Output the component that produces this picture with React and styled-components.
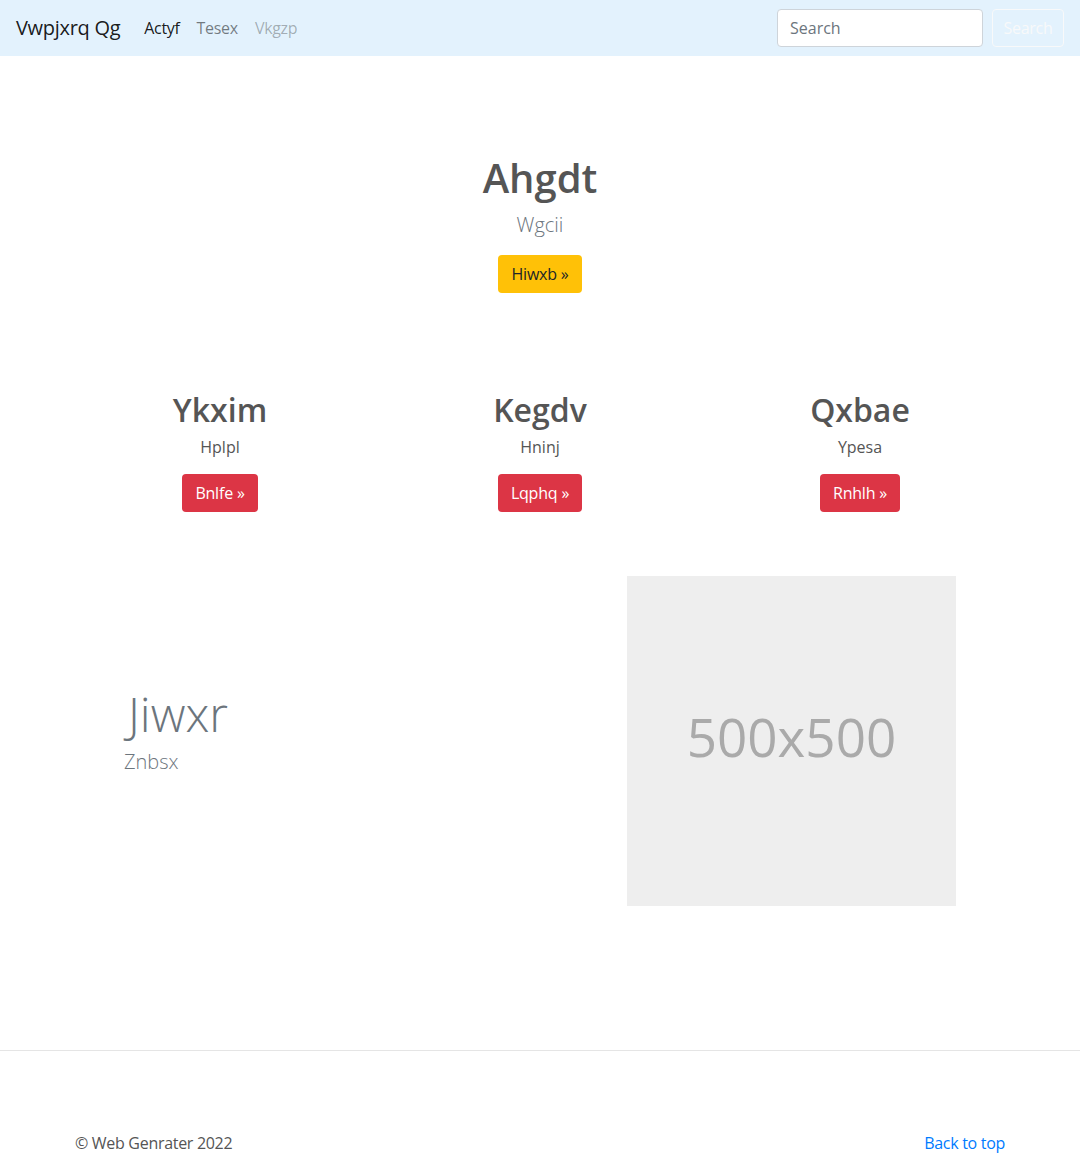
import React from "react";
import styled, { createGlobalStyle } from "styled-components";

const Global = createGlobalStyle`
  * { box-sizing: border-box; }
  body {
    margin: 0;
    font-family: "Open Sans", "Noto Sans", "Liberation Sans", sans-serif;
    font-size: 16px;
    line-height: 1.5;
    color: #555;
    background: #fff;
  }
`;

const Navbar = styled.nav`
  height: 56px;
  background: #e3f2fd;
  display: flex;
  align-items: center;
  padding: 0 16px;
`;
const Brand = styled.a`
  font-size: 20px;
  letter-spacing: -0.3px;
  color: rgba(0, 0, 0, 0.9);
  margin-right: 24px;
  text-decoration: none;
`;
const NavList = styled.div`
  display: flex;
  gap: 17px;
  flex: 1;
`;
const NavLink = styled.a`
  letter-spacing: -0.3px;
  color: ${(p) => (p.$state === "active" ? "rgba(0,0,0,0.9)" : p.$state === "disabled" ? "rgba(0,0,0,0.3)" : "rgba(0,0,0,0.5)")};
  text-decoration: none;
`;
const SearchForm = styled.form`
  display: flex;
  gap: 9px;
`;
const SearchInput = styled.input`
  width: 206px;
  height: 38px;
  border: 1px solid #ced4da;
  border-radius: 4px;
  padding: 6px 12px;
  font: inherit;
  color: #495057;
  background: #fff;
  &::placeholder { color: #6c757d; }
`;
const OutlineButton = styled.button`
  height: 38px;
  width: 72px;
  padding: 6px 0;
  border: 1px solid #f8f9fa;
  border-radius: 4px;
  background: transparent;
  color: #f8f9fa;
  font: inherit;
  letter-spacing: -0.3px;
`;

const Hero = styled.section`
  text-align: center;
  padding-top: 98px;
`;
const H1 = styled.h1`
  font-size: 40px;
  font-weight: 600;
  line-height: 1.2;
  margin: 0 0 8px;
  color: #555;
`;
const Lead = styled.p`
  font-size: 20px;
  font-weight: 300;
  margin: 0 0 15px;
  color: #6c757d;
`;
const Button = styled.a`
  display: inline-block;
  padding: 6px 12px;
  border: 1px solid transparent;
  border-radius: 4px;
  font-size: 16px;
  line-height: 1.5;
  letter-spacing: -0.2px;
  text-decoration: none;
  background: ${(p) => (p.$variant === "warning" ? "#ffc107" : "#dc3545")};
  color: ${(p) => (p.$variant === "warning" ? "#212529" : "#fff")};
`;

const Container = styled.div`
  width: 960px;
  margin: 0 auto;
  padding: 0 15px;
`;
const Columns = styled.div`
  display: grid;
  grid-template-columns: repeat(3, 1fr);
  margin: 98px -15px 0;
`;
const Col = styled.div`
  text-align: center;
  padding: 0 15px;
`;
const H2 = styled.h2`
  font-size: 32px;
  font-weight: 600;
  line-height: 1.2;
  margin: 0 0 6px;
  color: #555;
`;
const Para = styled.p`
  margin: 0 0 15px;
  color: #555;
`;

const Featurette = styled.div`
  display: flex;
  align-items: center;
  margin-top: 64px;
  padding: 0 49px;
`;
const FeatText = styled.div`
  flex: 1;
  padding-bottom: 21px;
`;
const FeatHeading = styled.h2`
  font-size: 48px;
  font-weight: 300;
  line-height: 1.2;
  margin: 0 0 5px;
  padding-left: 4px;
  color: #6c757d;
`;
const FeatLead = styled.p`
  font-size: 20px;
  font-weight: 300;
  margin: 0;
  color: #6c757d;
`;
const Placeholder = styled.div`
  width: 329px;
  height: 330px;
  padding-bottom: 10px;
  background: #eee;
  color: #aaa;
  font-size: 53px;
  display: flex;
  align-items: center;
  justify-content: center;
`;

const Rule = styled.hr`
  margin: 144px 0 0;
  border: 0;
  border-top: 1px solid #e5e5e5;
`;
const Footer = styled.footer`
  display: flex;
  justify-content: space-between;
  padding-top: 80px;
  padding-bottom: 40px;
`;
const FooterText = styled.p`
  margin: 0;
  color: #555;
  letter-spacing: -0.3px;
`;
const FooterLink = styled.a`
  color: #007bff;
  text-decoration: none;
  letter-spacing: -0.3px;
`;

const cols = [
  { t: "Ykxim", p: "Hplpl", b: "Bnlfe" },
  { t: "Kegdv", p: "Hninj", b: "Lqphq" },
  { t: "Qxbae", p: "Ypesa", b: "Rnhlh" },
];

export default function App() {
  return (
    <>
      <Global />
      <Navbar>
        <Brand href="#">Vwpjxrq Qg</Brand>
        <NavList>
          <NavLink href="#" $state="active">Actyf</NavLink>
          <NavLink href="#">Tesex</NavLink>
          <NavLink href="#" $state="disabled">Vkgzp</NavLink>
        </NavList>
        <SearchForm onSubmit={(e) => e.preventDefault()}>
          <SearchInput placeholder="Search" />
          <OutlineButton type="submit">Search</OutlineButton>
        </SearchForm>
      </Navbar>
      <Hero>
        <H1>Ahgdt</H1>
        <Lead>Wgcii</Lead>
        <Button href="#" $variant="warning">Hiwxb »</Button>
      </Hero>
      <Container>
        <Columns>
          {cols.map((c) => (
            <Col key={c.t}>
              <H2>{c.t}</H2>
              <Para>{c.p}</Para>
              <Button href="#">{c.b} »</Button>
            </Col>
          ))}
        </Columns>
        <Featurette>
          <FeatText>
            <FeatHeading>Jiwxr</FeatHeading>
            <FeatLead>Znbsx</FeatLead>
          </FeatText>
          <Placeholder>500x500</Placeholder>
        </Featurette>
      </Container>
      <Rule />
      <Container>
        <Footer>
          <FooterText>© Web Genrater 2022</FooterText>
          <FooterLink href="#">Back to top</FooterLink>
        </Footer>
      </Container>
    </>
  );
}
